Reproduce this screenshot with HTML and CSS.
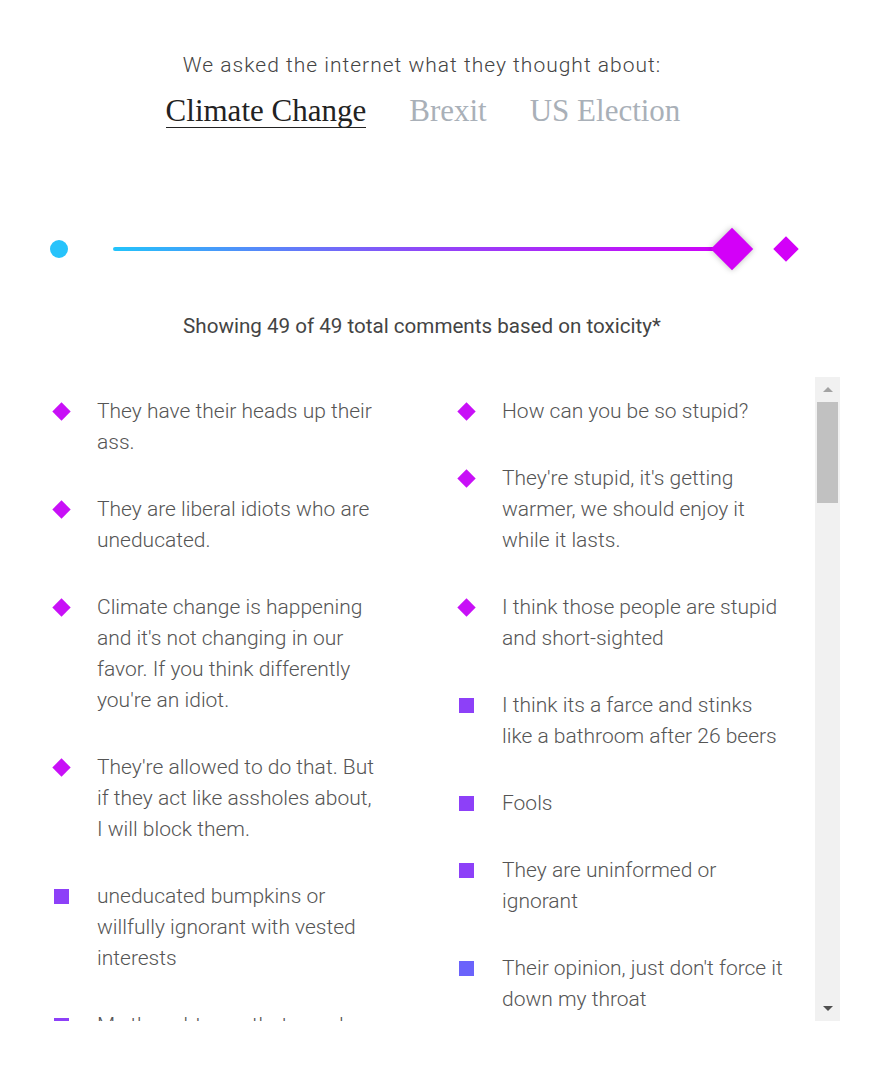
FILE: index.html
```html
<!DOCTYPE html>
<html lang="en">
<head>
<meta charset="utf-8">
<title>Toxicity</title>
<link rel="stylesheet" href="styles.css">
</head>
<body>
<main class="page">
  <p class="intro">We asked the internet what they thought about:</p>
  <nav class="tabs">
    <span class="tab active">Climate Change</span>
    <span class="tab">Brexit</span>
    <span class="tab">US Election</span>
  </nav>

  <div class="slider">
    <span class="dot"></span>
    <div class="track">
      <span class="line"></span>
      <span class="thumb"></span>
    </div>
    <span class="end-mark"></span>
  </div>

  <p class="count">Showing 49 of 49 total comments based on toxicity*</p>

  <section class="list-frame">
    <div class="list">
      <div class="col">
        <div class="item"><span class="ic"><i class="diamond"></i></span><p>They have their heads up their ass.</p></div>
        <div class="item"><span class="ic"><i class="diamond"></i></span><p>They are liberal idiots who are uneducated.</p></div>
        <div class="item"><span class="ic"><i class="diamond"></i></span><p>Climate change is happening and it's not changing in our favor. If you think differently you're an idiot.</p></div>
        <div class="item"><span class="ic"><i class="diamond"></i></span><p>They're allowed to do that. But if they act like assholes about, I will block them.</p></div>
        <div class="item"><span class="ic"><i class="sq s1"></i></span><p>uneducated bumpkins or willfully ignorant with vested interests</p></div>
        <div class="item"><span class="ic"><i class="sq s1"></i></span><p>My thoughts are that people should be a bit more open minded.</p></div>
        <div class="item"><span class="ic"><i class="sq s2"></i></span><p>They need to read more science and less opinion.</p></div>
        <div class="item"><span class="ic"><i class="sq s2"></i></span><p>I don't understand how anyone can still deny it.</p></div>
      </div>
      <div class="col">
        <div class="item"><span class="ic"><i class="diamond"></i></span><p>How can you be so stupid?</p></div>
        <div class="item"><span class="ic"><i class="diamond"></i></span><p>They're stupid, it's getting warmer, we should enjoy it while it lasts.</p></div>
        <div class="item"><span class="ic"><i class="diamond"></i></span><p>I think those people are stupid and short-sighted</p></div>
        <div class="item"><span class="ic"><i class="sq s1"></i></span><p>I think its a farce and stinks like a bathroom after 26 beers</p></div>
        <div class="item"><span class="ic"><i class="sq s1"></i></span><p>Fools</p></div>
        <div class="item"><span class="ic"><i class="sq s1"></i></span><p>They are uninformed or ignorant</p></div>
        <div class="item"><span class="ic"><i class="sq s2"></i></span><p>Their opinion, just don't force it down my throat</p></div>
        <div class="item"><span class="ic"><i class="sq s2"></i></span><p>They don't want to face the truth.</p></div>
      </div>
    </div>
    <div class="scrollbar" aria-hidden="true">
      <span class="sb-btn"><i class="arrow-up"></i></span>
      <span class="sb-track"><span class="sb-thumb"></span></span>
      <span class="sb-btn"><i class="arrow-down"></i></span>
    </div>
  </section>
</main>
</body>
</html>
```

FILE: styles.css
```css
* { box-sizing: border-box; }

html, body {
  margin: 0;
  padding: 0;
  background: #ffffff;
}

.page {
  width: 870px;
  height: 1074px;
  overflow: hidden;
  font-family: Roboto, "Liberation Sans", sans-serif;
}

.intro {
  margin: 53px 0 0;
  width: 844px;
  text-align: center;
  font-size: 21px;
  line-height: 24px;
  font-weight: 300;
  letter-spacing: 1px;
  color: #444444;
}

.tabs {
  width: 844px;
  display: flex;
  justify-content: center;
  gap: 43px;
  margin-top: 17.5px;
  padding-left: 2px;
}

.tab {
  font-family: "Roboto Slab", "Liberation Serif", serif;
  font-size: 31px;
  line-height: 32px;
  color: #a9b0b8;
  border-bottom: 1px solid transparent;
}

.tab.active {
  color: #222222;
  border-bottom-color: #222222;
}

.slider {
  margin-top: 100.5px;
  height: 42px;
  display: flex;
  align-items: center;
  padding-left: 50px;
  padding-right: 71px;
}

.dot {
  width: 18px;
  height: 18px;
  border-radius: 50%;
  background: #27c3fb;
  flex: none;
}

.track {
  position: relative;
  flex: 1;
  height: 42px;
  margin-left: 45px;
}

.line {
  position: absolute;
  left: 0;
  right: 21px;
  top: 19px;
  height: 4px;
  border-radius: 2px;
  background: linear-gradient(to right, #22c4fb, #8f48f8 50%, #d100f8);
}

.thumb {
  position: absolute;
  right: 6px;
  top: 6px;
  width: 30px;
  height: 30px;
  background: #d300f8;
  transform: rotate(45deg);
  box-shadow: 0 0 6px rgba(0, 0, 0, 0.28);
}

.end-mark {
  flex: none;
  width: 18px;
  height: 18px;
  margin-left: 24px;
  margin-right: 4px;
  background: #d300f8;
  transform: rotate(45deg);
}

.count {
  margin: 44px 0 0;
  width: 844px;
  text-align: center;
  font-size: 20.6px;
  line-height: 24px;
  font-weight: 400;
  color: #444444;
}

.list-frame {
  margin: 39px 0 0 30px;
  width: 810px;
  height: 644px;
  display: flex;
}

.list {
  flex: 1;
  height: 644px;
  overflow: hidden;
  display: flex;
  align-items: flex-start;
  gap: 69px;
  padding: 19px 0 0 20px;
}

.col {
  width: 336px;
  flex: none;
  display: flex;
  flex-direction: column;
  gap: 36px;
}

.item {
  display: flex;
  align-items: flex-start;
}

.ic {
  width: 22px;
  height: 31px;
  flex: none;
  display: flex;
  align-items: center;
  justify-content: center;
  margin-right: 25px;
}

.item p {
  margin: 0;
  width: 283px;
  font-size: 21px;
  line-height: 31px;
  font-weight: 300;
  color: #555555;
}

.diamond {
  display: block;
  width: 13px;
  height: 13px;
  background: #c810f7;
  transform: rotate(45deg);
}

.sq {
  display: block;
  width: 15px;
  height: 15px;
  background: #8d40f8;
}

.sq.s2 { background: #6b63fb; }

.scrollbar {
  flex: none;
  width: 25px;
  height: 644px;
  background: #f1f1f1;
  display: flex;
  flex-direction: column;
}

.sb-btn {
  flex: none;
  height: 25px;
  display: flex;
  align-items: center;
  justify-content: center;
}

.sb-track {
  flex: 1;
  display: flex;
  flex-direction: column;
}

.sb-thumb {
  display: block;
  height: 101px;
  margin: 0 2px;
  background: #c1c1c1;
}

.arrow-up {
  display: block;
  width: 0;
  height: 0;
  border-left: 5px solid transparent;
  border-right: 5px solid transparent;
  border-bottom: 5px solid #a3a3a3;
}

.arrow-down {
  display: block;
  width: 0;
  height: 0;
  border-left: 5px solid transparent;
  border-right: 5px solid transparent;
  border-top: 5px solid #505050;
}
```
